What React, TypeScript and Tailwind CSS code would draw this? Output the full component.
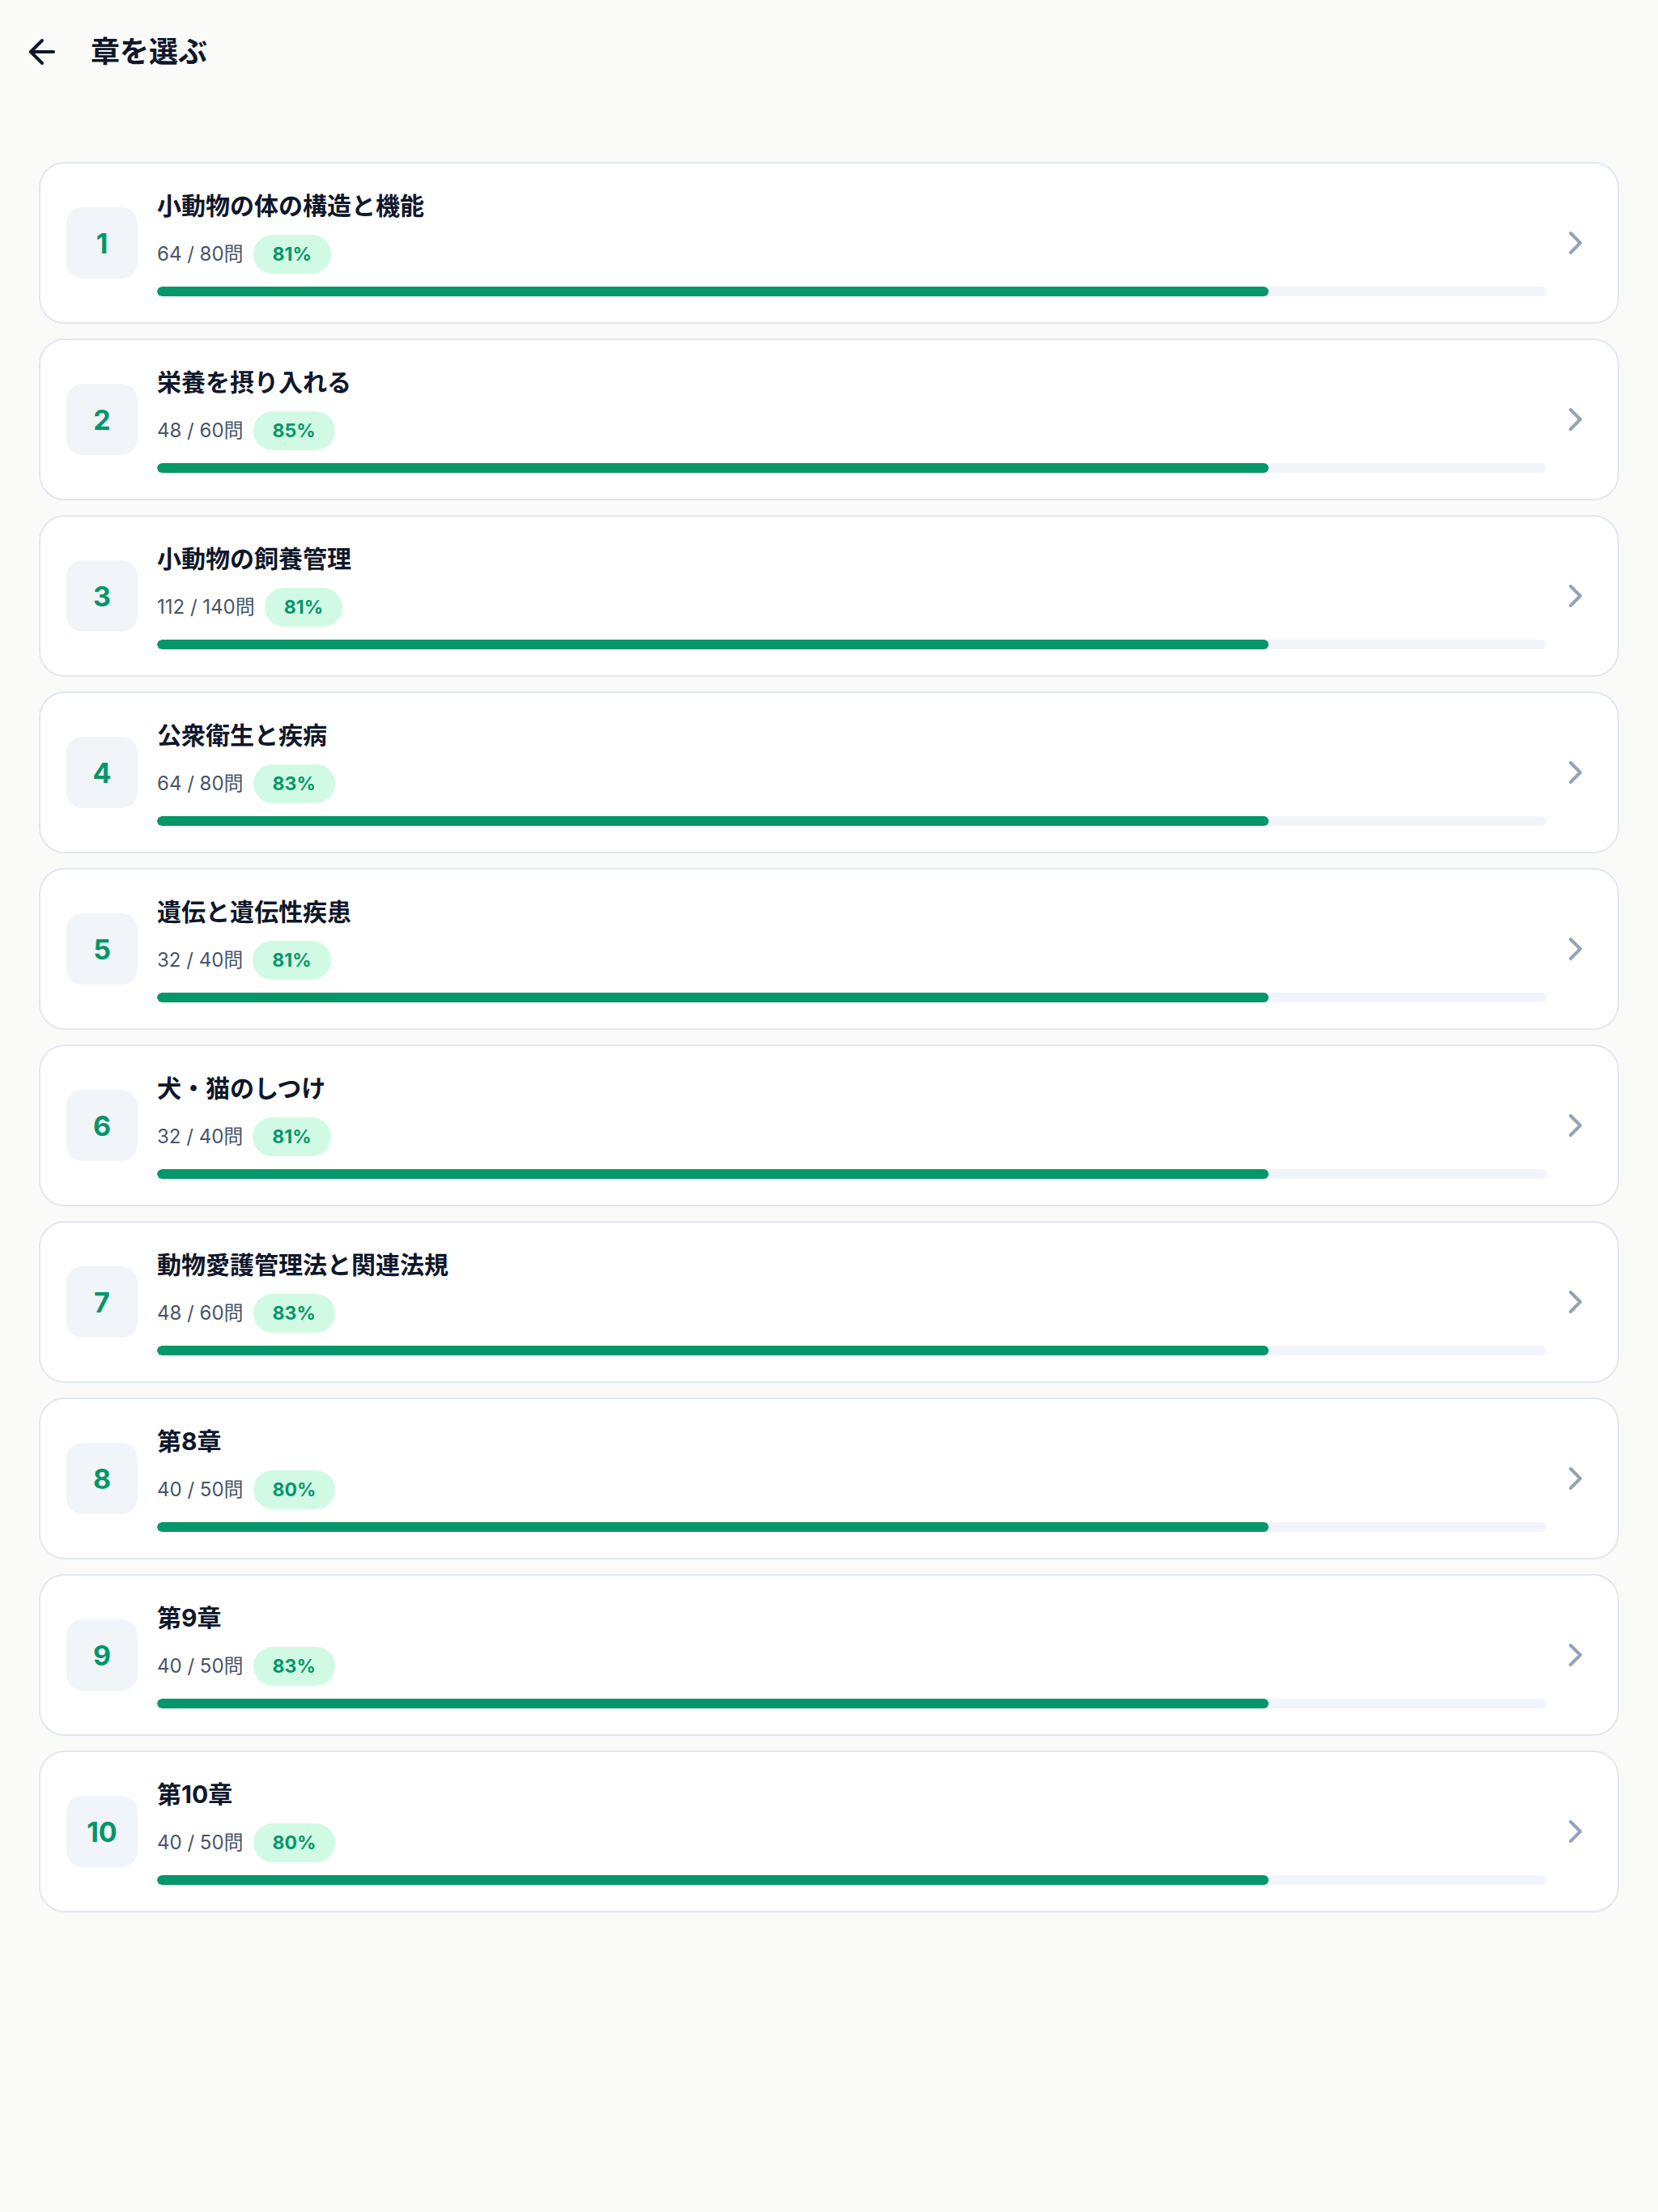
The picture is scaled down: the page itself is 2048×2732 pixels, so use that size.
import { ArrowLeft, ChevronRight } from "lucide-react";

type Chapter = {
  no: number;
  title: string;
  done: number;
  total: number;
  rate: number;
};

const chapters: Chapter[] = [
  { no: 1, title: "小動物の体の構造と機能", done: 64, total: 80, rate: 81 },
  { no: 2, title: "栄養を摂り入れる", done: 48, total: 60, rate: 85 },
  { no: 3, title: "小動物の飼養管理", done: 112, total: 140, rate: 81 },
  { no: 4, title: "公衆衛生と疾病", done: 64, total: 80, rate: 83 },
  { no: 5, title: "遺伝と遺伝性疾患", done: 32, total: 40, rate: 81 },
  { no: 6, title: "犬・猫のしつけ", done: 32, total: 40, rate: 81 },
  { no: 7, title: "動物愛護管理法と関連法規", done: 48, total: 60, rate: 83 },
  { no: 8, title: "第8章", done: 40, total: 50, rate: 80 },
  { no: 9, title: "第9章", done: 40, total: 50, rate: 83 },
  { no: 10, title: "第10章", done: 40, total: 50, rate: 80 },
];

const font = {
  fontFamily: 'Inter, "Noto Sans CJK JP", sans-serif',
};

function ChapterCard({ chapter }: { chapter: Chapter }) {
  // progress is drawn from answered / total
  const progress = (chapter.done / chapter.total) * 100;

  return (
    <button className="flex w-full items-center rounded-[32px] border-2 border-[#e2e8f0] bg-white py-[32px] pl-[32px] pr-[28px] text-left">
      <div className="flex h-[88px] w-[88px] shrink-0 items-center justify-center rounded-[20px] bg-[#f1f5f9] text-[34px] font-bold text-[#059669]">
        {chapter.no}
      </div>
      <div className="ml-[24px] flex min-w-0 flex-1 flex-col">
        <h2 className="text-[30px] font-bold leading-[40px] text-[#0f172a]">
          {chapter.title}
        </h2>
        <div className="mt-[16px] flex h-[48px] items-center gap-[12px]">
          <span className="text-[24px] leading-[32px] text-[#475569]">
            {chapter.done} / {chapter.total}問
          </span>
          <span className="flex h-[48px] items-center rounded-full bg-[#d1fae5] px-[24px] text-[23px] font-bold leading-[32px] text-[#059669]">
            {chapter.rate}%
          </span>
        </div>
        <div className="mt-[16px] h-[12px] w-full overflow-hidden rounded-full bg-[#f1f5f9]">
          <div
            className="h-full rounded-full bg-[#059669]"
            style={{ width: `${progress}%` }}
          />
        </div>
      </div>
      <ChevronRight
        size={48}
        strokeWidth={2}
        className="ml-[12px] shrink-0 text-[#94a3b8]"
      />
    </button>
  );
}

export default function App() {
  return (
    <div className="min-h-screen bg-[#fafaf9]" style={font}>
      <header className="flex h-[128px] items-center gap-[36px] px-[28px]">
        <ArrowLeft size={48} strokeWidth={2} className="text-[#0f172a]" />
        <h1 className="text-[36px] font-bold text-[#0f172a]">章を選ぶ</h1>
      </header>
      <main className="mt-[72px] flex flex-col gap-[18px] px-[48px]">
        {chapters.map((chapter) => (
          <ChapterCard key={chapter.no} chapter={chapter} />
        ))}
      </main>
    </div>
  );
}
